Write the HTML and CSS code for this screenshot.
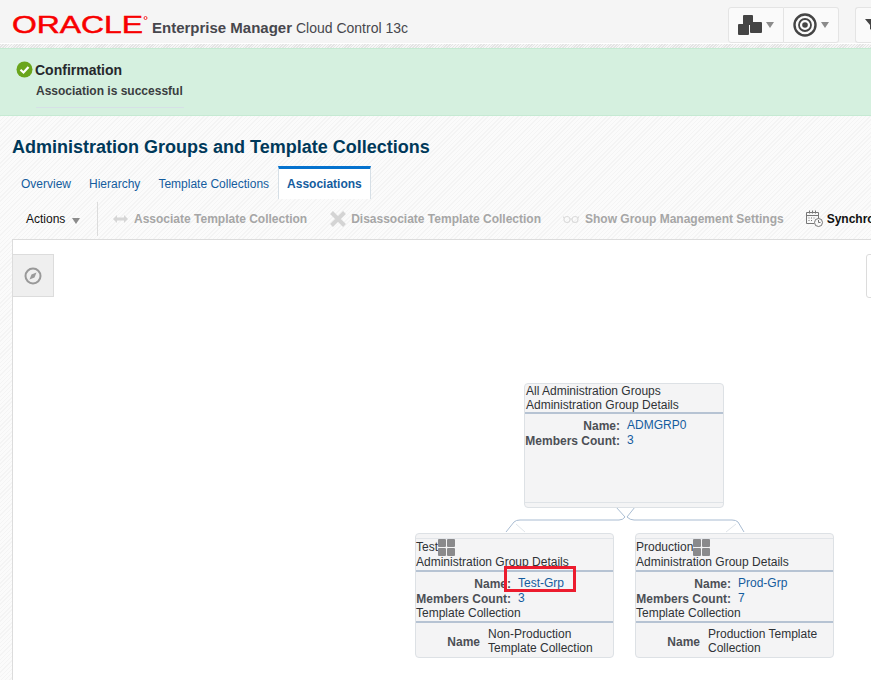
FILE: index.html

```html
<!DOCTYPE html>
<html lang="en">
<head>
  <meta charset="UTF-8" />
  <title>Administration Groups and Template Collections</title>
  <link rel="stylesheet" href="styles.css">
</head>
<body>
  <header class="topbar">
    <svg class="logo" width="136" height="30" viewBox="0 0 136 30">
      <text class="logo-text" x="0" y="25" textLength="131" lengthAdjust="spacingAndGlyphs">ORACLE</text>
      <circle cx="133.500" cy="10" r="1.500" fill="none" stroke="#f80000" stroke-width="0.800"/>
    </svg>
    <span class="brand"><b>Enterprise Manager</b> Cloud Control 13c</span>
    <div class="top-actions">
      <div class="btn-group">
        <button class="top-btn">
          <svg width="24" height="24" viewBox="0 0 24 24" fill="#444">
            <rect x="5" y="2" width="10" height="10" rx="1"/>
            <rect x="0" y="11" width="11" height="11" rx="1"/>
            <rect x="12" y="9" width="12" height="11" rx="1"/>
          </svg>
          <i class="caret"></i>
        </button>
        <button class="top-btn">
          <svg width="24" height="24" viewBox="0 0 24 24" fill="none" stroke="#444">
            <circle cx="12" cy="12" r="10.500" stroke-width="2.400"/>
            <circle cx="12" cy="12" r="6" stroke-width="1.800"/>
            <circle cx="12" cy="12" r="2.800" fill="#444" stroke="none"/>
          </svg>
          <i class="caret"></i>
        </button>
      </div>
      <button class="top-btn top-btn-last">
        <svg width="14" height="16" viewBox="0 0 14 16" fill="#444">
          <path d="M0 2h14L9 8v7L5 12V8z"/>
        </svg>
      </button>
    </div>
  </header>

  <div class="strip"></div>

  <section class="confirm">
    <div class="confirm-head">
      <svg width="17" height="17" viewBox="0 0 17 17">
        <circle cx="8.500" cy="8.500" r="8" fill="#6aa51c"/>
        <path d="M4.500 8.800l3 2.700 5-5.500" fill="none" stroke="#fff" stroke-width="2.200"/>
      </svg>
      <h3>Confirmation</h3>
    </div>
    <p class="confirm-msg">Association is successful</p>
  </section>

  <main class="content">
    <h1>Administration Groups and Template Collections</h1>

    <nav class="tabs">
      <a href="#">Overview</a>
      <a href="#">Hierarchy</a>
      <a href="#">Template Collections</a>
      <a href="#" class="active">Associations</a>
    </nav>

    <div class="toolbar">
      <span class="actions">Actions <i class="caret caret-sm"></i></span>
      <span class="sep"></span>
      <span class="tool tool-first">
        <svg width="15" height="8" viewBox="0 0 15 8" fill="#d6d6d6"><path d="M0 4l4-4v2.500h7V0l4 4-4 4V5.500H4V8z"/></svg>
        Associate Template Collection
      </span>
      <span class="tool tool-x">
        <svg width="16" height="16" viewBox="0 0 16 16" fill="none" stroke="#d4d4d4" stroke-width="4"><path d="M1.500 1.500l13 13M14.500 1.500l-13 13"/></svg>
        Disassociate Template Collection
      </span>
      <span class="tool tool-glasses">
        <svg width="16" height="8" viewBox="0 0 16 8" fill="none" stroke="#dcdcdc" stroke-width="1.200"><circle cx="4" cy="4.500" r="3"/><circle cx="12" cy="4.500" r="3"/><path d="M7 4h2M1 3L0 1.500M15 3l1-1.500"/></svg>
        Show Group Management Settings
      </span>
      <span class="tool tool-on">
        <svg width="17" height="17" viewBox="0 0 17 17" fill="none" stroke="#777"><path d="M.5 2.500h12v6M8 13.500H.5v-11M.5 5.500h12M3.500.5v3M6.500.5v3M9.500.5v3M2.500 8h1M5 8h1M7.500 8h1M2.500 10.500h1M5 10.500h1"/><circle cx="12.500" cy="12.500" r="4"/><path d="M12.500 10v2.500h2"/></svg>
        Synchronize Template Collections
      </span>
    </div>

    <div class="canvas">
      <button class="panel-btn">
        <svg width="18" height="18" viewBox="0 0 18 18" fill="none" stroke="#999" stroke-width="2"><circle cx="9" cy="9" r="7.500"/><path d="M12.500 5.500L7.500 7.500 5.500 12.500 10.500 10.500z" fill="#999" stroke="none"/></svg>
      </button>
      <div class="panel-right"></div>

      <!-- connector between parent and child nodes -->
      <svg class="links" width="260" height="40" viewBox="0 0 260 40" fill="none">
        <path class="link-line" d="M1 32L9 22Q11 20 15 20H114Q118 20 120 17L111 7"/>
        <path class="link-line" d="M130 7L122 17Q125 20 129 20H227Q231 20 233 22L239 32"/>
        <path class="link-soft" d="M11 24L20 32M221 32L231 24M113 7H129"/>
      </svg>

      <article class="node node-root">
        <div class="node-head">All Administration Groups<br>Administration Group Details</div>
        <div class="node-rows">
          <div class="row"><span class="key">Name:</span><a href="#">ADMGRP0</a></div>
          <div class="row"><span class="key">Members Count:</span><a href="#">3</a></div>
        </div>
        <div class="node-foot"></div>
      </article>

      <article class="node node-child node-test">
        <div class="node-head node-head-top">
          <div class="node-title">Test<span class="tiles"><i></i><i></i><i></i><i></i></span></div>
          Administration Group Details
        </div>
        <div class="node-rows node-rows-child">
          <div class="row"><span class="key">Name:</span><a href="#">Test-Grp</a></div>
          <div class="row"><span class="key">Members Count:</span><a href="#">3</a></div>
          <div class="row-plain">Template Collection</div>
        </div>
        <div class="node-tpl">
          <span class="key key-tpl">Name</span>
          <span class="tpl-val">Non-Production<br>Template Collection</span>
        </div>
      </article>

      <article class="node node-child node-prod">
        <div class="node-head node-head-top">
          <div class="node-title">Production<span class="tiles"><i></i><i></i><i></i><i></i></span></div>
          Administration Group Details
        </div>
        <div class="node-rows node-rows-child">
          <div class="row"><span class="key">Name:</span><a href="#">Prod-Grp</a></div>
          <div class="row"><span class="key">Members Count:</span><a href="#">7</a></div>
          <div class="row-plain">Template Collection</div>
        </div>
        <div class="node-tpl">
          <span class="key key-tpl">Name</span>
          <span class="tpl-val">Production Template<br>Collection</span>
        </div>
      </article>

      <div class="callout"></div>
    </div>
  </main>
</body>
</html>
```

FILE: styles.css

```css
html, body {
  height: 100%;
}

body {
  margin: 0;
  overflow: hidden;
  font-family: "Liberation Sans", Arial, sans-serif;
  font-size: 12px;
  color: #333;
  background: #fff;
}

a {
  color: #145c9e;
  text-decoration: none;
}

button {
  font: inherit;
  padding: 0;
}

/* header */
.topbar {
  display: flex;
  align-items: center;
  height: 43px;
  padding-left: 12px;
  background: #f5f5f5;
  border-bottom: 1px solid #fff;
  box-sizing: content-box;
}

.logo {
  flex: none;
  align-self: flex-start;
  margin-top: 8px;
}

.logo-text {
  font-family: "Liberation Sans", Arial, sans-serif;
  font-size: 24px;
  fill: #f80000;
  stroke: #f80000;
  stroke-width: .5px;
}

.brand {
  margin-left: 4px;
  margin-top: 11px;
  font-size: 14px;
  color: #47474d;
  white-space: nowrap;
}

.brand b {
  font-size: 15px;
}

.top-actions {
  display: flex;
  margin-left: auto;
  padding-top: 7px;
  height: 36px;
  align-self: flex-start;
}

.btn-group {
  display: flex;
  margin-right: 16px;
}

.top-btn {
  display: flex;
  align-items: center;
  justify-content: center;
  gap: 4px;
  width: 55px;
  height: 36px;
  background: #fafafa;
  border: 1px solid #e4e4e4;
  border-left: 0;
  border-radius: 0 3px 3px 0;
}

.btn-group .top-btn:first-child {
  width: 56px;
  border-left: 1px solid #e4e4e4;
  border-radius: 3px 0 0 3px;
}

.top-btn-last {
  width: 16px;
  box-sizing: border-box;
  overflow: hidden;
  border-left: 1px solid #e4e4e4;
  border-right: 0;
  border-radius: 3px 0 0 3px;
  justify-content: flex-start;
  padding-left: 9px;
}

.top-btn-last svg {
  flex: none;
}

.caret {
  display: inline-block;
  width: 0;
  height: 0;
  border-left: 4.500px solid transparent;
  border-right: 4.500px solid transparent;
  border-top: 6px solid #8b8b8b;
}

.caret-sm {
  margin-left: 3px;
  vertical-align: -1px;
}

.strip {
  height: 4px;
  background: repeating-linear-gradient(135deg, #e4e4e4 0 1px, #f6f6f6 1px 2px);
}

/* confirmation banner */
.confirm {
  height: 68px;
  padding: 12px 0 0 16px;
  box-sizing: border-box;
  background: #d5f0df;
  border-top: 1px solid #c6ead3;
  border-bottom: 1px solid #c6ead3;
}

.confirm-head {
  display: flex;
  align-items: center;
  gap: 2px;
}

.confirm h3 {
  margin: 0;
  font-size: 14px;
  font-weight: bold;
  color: #26282c;
}

.confirm-msg {
  width: 148px;
  margin: 6px 0 0 20px;
  padding-bottom: 9px;
  font-size: 12px;
  font-weight: bold;
  color: #3a3d40;
  border-bottom: 1px solid #d6e0e6;
  white-space: nowrap;
}

/* page body */
.content {
  padding: 20px 0 0 12px;
  height: 564px;
  box-sizing: border-box;
  background: repeating-linear-gradient(135deg, #f4f4f4 0 1px, #fbfbfb 1px 3px);
}

h1 {
  margin: 0;
  height: 30px;
  font-size: 18px;
  line-height: 22px;
  color: #00395a;
}

.tabs {
  display: flex;
  height: 33px;
  align-items: stretch;
}

.tabs a {
  padding: 11px 9px 0;
  box-sizing: border-box;
  white-space: nowrap;
}

.tabs .active {
  margin-left: 0;
  background: #fff;
  border: 1px solid #d6dfe6;
  border-top: 3px solid #0572ce;
  border-bottom: 0;
  padding-top: 8px;
  font-weight: bold;
  padding-left: 8px;
  padding-right: 8px;
  color: #145c9e;
}

.toolbar {
  display: flex;
  align-items: center;
  height: 40px;
  white-space: nowrap;
  overflow: hidden;
  padding-left: 14px;
  padding-bottom: 1px;
  box-sizing: border-box;
}

.actions {
  color: #111;
  width: 71px;
  flex: none;
}

.sep {
  flex: none;
  width: 1px;
  height: 34px;
  background: #dcdcdc;
}

.tool {
  display: inline-flex;
  align-items: center;
  gap: 6px;
  margin-left: 22px;
  font-weight: bold;
  color: #a6a6a6;
  flex: none;
}

.tool-first {
  margin-left: 15px;
}

.tool-x {
  gap: 5px;
  margin-left: 23px;
}

.tool-on {
  color: #111;
  margin-left: 22px;
  gap: 4px;
}

/* diagram canvas */
.canvas {
  position: relative;
  height: 441px;
  background: #fff;
  border-top: 1px solid #dcdcdc;
  border-left: 1px solid #dcdcdc;
  box-sizing: border-box;
  overflow: hidden;
}

.panel-btn {
  position: absolute;
  left: -1px;
  top: 14px;
  width: 42px;
  height: 43px;
  background: #efefef;
  border: 1px solid #dcdcdc;
  border-radius: 0;
  display: flex;
  align-items: center;
  justify-content: center;
}

.panel-right {
  position: absolute;
  left: 853px;
  top: 14px;
  width: 30px;
  height: 42px;
  background: #fff;
  border: 1px solid #dcdcdc;
  border-radius: 3px 0 0 3px;
}

.links {
  position: absolute;
  left: 492px;
  top: 260px;
}

.link-line {
  stroke: #a9bcd2;
}

.link-soft {
  stroke: #e0e5ea;
}

.node {
  position: absolute;
  width: 200px;
  box-sizing: border-box;
  background: #f4f4f5;
  border: 1px solid #dde1e5;
  border-radius: 4px;
  line-height: 14px;
  color: #2f3236;
}

.node-child {
  width: 199px;
}

.node-root {
  left: 511px;
  top: 143px;
  height: 125px;
}

.node-test {
  left: 402px;
  top: 293px;
  height: 125px;
}

.node-prod {
  left: 622px;
  top: 293px;
  height: 125px;
}

.node-head {
  padding: 0 1px;
  height: 30px;
  border-bottom: 2px solid #b6c3d3;
  box-sizing: border-box;
}

.node-head-top {
  height: 34px;
  margin-top: 4px;
  padding: 0;
  border-top: 1px solid #e2e5e9;
}

.node-title {
  display: flex;
  height: 16px;
  line-height: 17px;
}

.tiles {
  display: grid;
  grid-template-columns: 8px 8px;
  grid-template-rows: 8px 8px;
  gap: 1px;
}

.tiles i {
  background: #8a8a8c;
  border-radius: 1px;
}

.node-rows {
  padding: 4px 0 0;
}

.node-rows-child {
  height: 51px;
  box-sizing: border-box;
  border-bottom: 2px solid #b6c3d3;
}

.row {
  display: flex;
  height: 15px;
}

.key {
  display: inline-block;
  width: 95px;
  flex: none;
  text-align: right;
  font-weight: bold;
  color: #4c4f55;
  padding-top: 1px;
}

.row a {
  margin-left: 7px;
}

.row-plain {
  height: 14px;
}

.node-foot {
  position: absolute;
  left: 0;
  right: 0;
  bottom: 4px;
  border-top: 1px solid #dfe3e7;
}

.node-tpl {
  display: flex;
  align-items: center;
  padding: 4px 0 0;
}

.key-tpl {
  width: 64px;
}

.tpl-val {
  margin-left: 8px;
}

/* red highlight drawn over the screenshot */
.callout {
  position: absolute;
  left: 491px;
  top: 326px;
  width: 72px;
  height: 26px;
  box-sizing: border-box;
  border: 3px solid #ec1c2e;
}
```
